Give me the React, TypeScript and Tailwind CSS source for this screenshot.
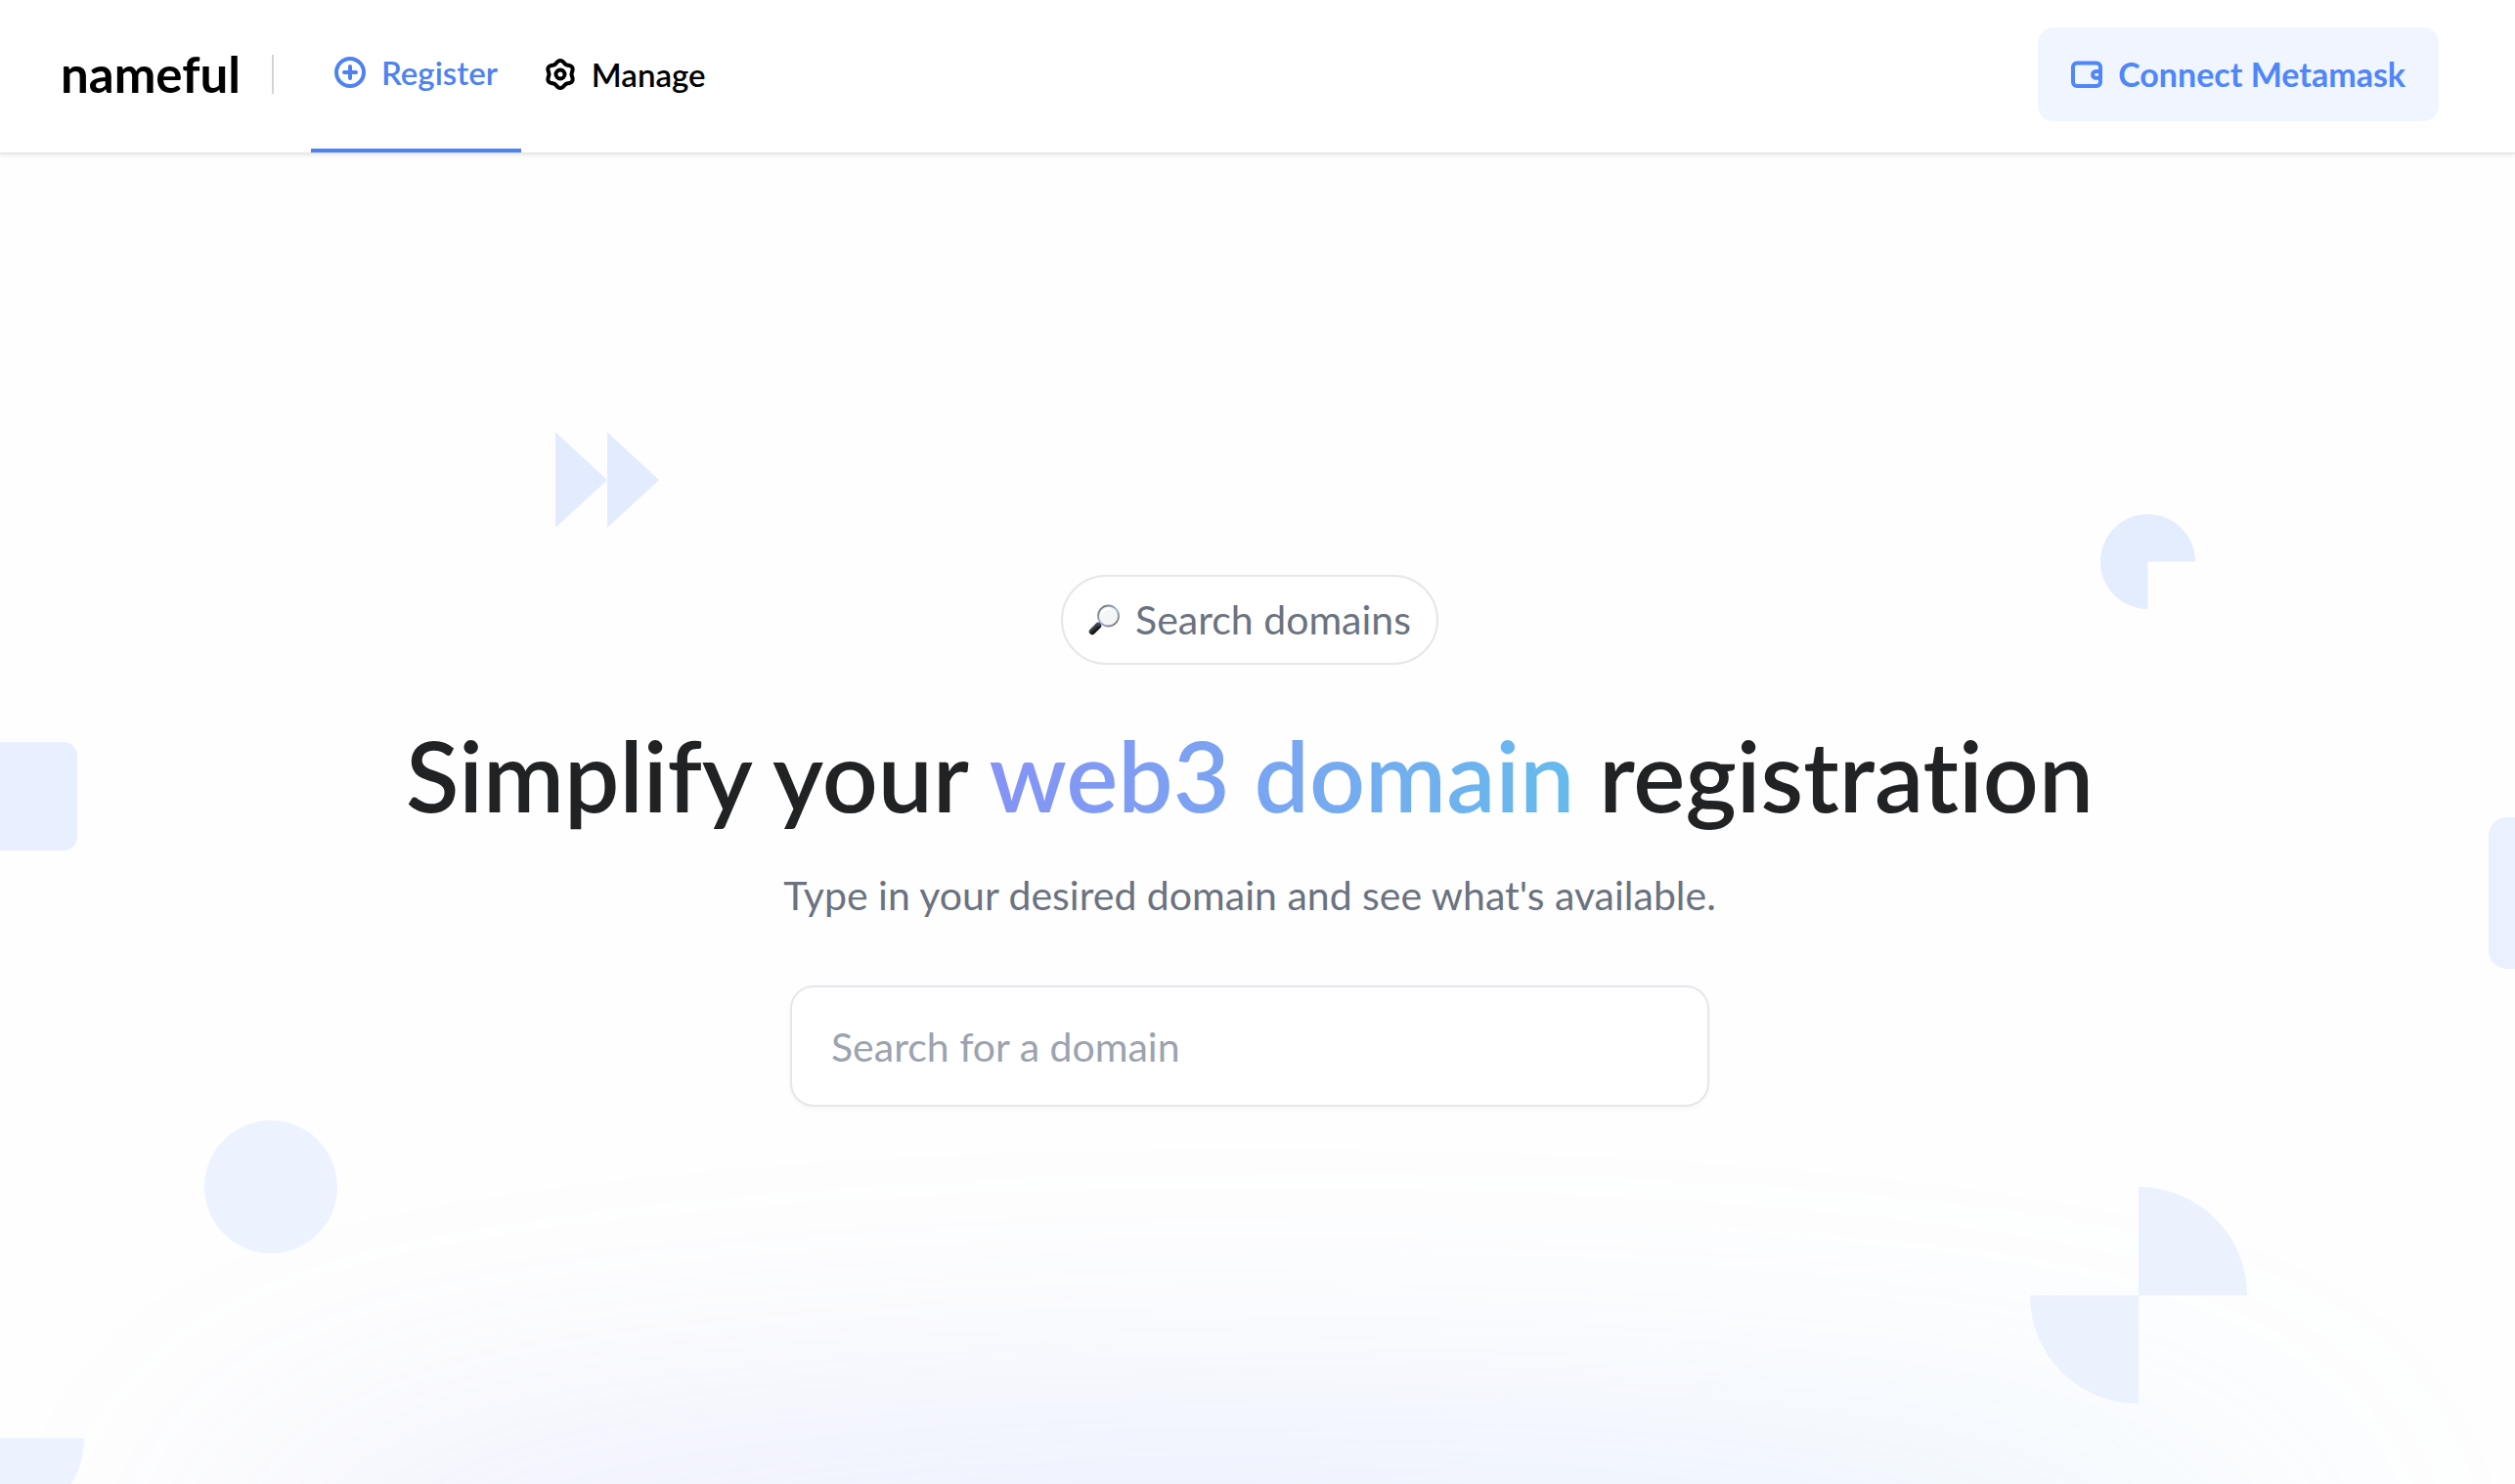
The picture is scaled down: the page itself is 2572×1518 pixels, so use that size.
const TEXT = "[font-variant-ligatures:none]";

const gearPath =
  Array.from({ length: 72 }, (_, i) => {
    const angle = (i / 72) * Math.PI * 2;
    const radius = 12.8 + 1.3 * Math.cos(angle * 6);
    const x = (16 + radius * Math.sin(angle)).toFixed(2);
    const y = (16 - radius * Math.cos(angle)).toFixed(2);
    return `${i === 0 ? "M" : "L"}${x} ${y}`;
  }).join("") + "Z";

function PlusCircleIcon() {
  return (
    <svg viewBox="0 0 32 32" className="size-8" fill="none" stroke="currentColor" strokeWidth="4" strokeLinecap="round" aria-hidden="true">
      <circle cx="16" cy="16" r="14" />
      <path d="M16 10v12M10 16h12" />
    </svg>
  );
}

function GearIcon() {
  return (
    <svg viewBox="0 0 32 32" className="size-8" fill="none" stroke="currentColor" strokeWidth="4" strokeLinejoin="round" aria-hidden="true">
      <path d={gearPath} />
      <circle cx="16" cy="16" r="4.5" />
    </svg>
  );
}

function WalletIcon() {
  return (
    <svg viewBox="0 0 32 32" className="size-8" fill="none" stroke="currentColor" strokeWidth="4" strokeLinejoin="round" aria-hidden="true">
      <rect x="2" y="4.5" width="28" height="23.5" rx="4" />
      <path d="M29 13h-3.5a3.4 3.4 0 0 0 0 6.800H29" />
    </svg>
  );
}

function MagnifierIcon() {
  return (
    <svg viewBox="0 0 32 32" className="size-8" fill="none" aria-hidden="true">
      <defs>
        <linearGradient id="handle" x1="5" y1="22" x2="11" y2="29" gradientUnits="userSpaceOnUse">
          <stop stopColor="#555a60" />
          <stop offset="0.5" stopColor="#1b1d20" />
          <stop offset="1" stopColor="#000000" />
        </linearGradient>
        <linearGradient id="rim" x1="12" y1="4" x2="28" y2="22" gradientUnits="userSpaceOnUse">
          <stop stopColor="#77797d" />
          <stop offset="0.5" stopColor="#9fb4d4" />
          <stop offset="1" stopColor="#7c726c" />
        </linearGradient>
      </defs>
      <path d="M10 22 4 28" stroke="url(#handle)" strokeWidth="6.5" strokeLinecap="round" />
      <path d="m10 22 4-4" stroke="#4a4d52" strokeWidth="2.5" />
      <circle cx="20.5" cy="12" r="10.5" fill="#f4f5f6" stroke="url(#rim)" strokeWidth="1.8" />
      <path d="M14.5 8.5a7 7 0 0 1 8-3" stroke="#ffffff" strokeWidth="2" strokeLinecap="round" />
    </svg>
  );
}

function Backdrop() {
  return (
    <div className="pointer-events-none absolute inset-0 -z-10 overflow-hidden" aria-hidden="true">
      <div className="absolute -bottom-64 left-[8%] right-[8%] h-80 rounded-[50%] bg-linear-to-r from-[#818cf8] via-[#7f9bfa] to-[#7dc8fa] opacity-[0.17] blur-[150px]" />
      <svg viewBox="0 0 106 96" className="absolute left-[22%] top-[286px] w-[108px] fill-[#e3ecfe]">
        <path d="M2 0 54 48 2 96ZM54 0l52 48-52 48Z" />
      </svg>
      <svg viewBox="0 0 98 98" className="absolute right-[327px] top-[370px] w-[97px] fill-[#e3edfd]">
        <path d="M49 49h49A49 49 0 1 0 49 98Z" />
      </svg>
      <div className="absolute left-0 top-[603px] h-[111px] w-[79px] rounded-r-[14px] bg-[#e8effe]" />
      <div className="absolute right-0 top-[680px] h-[155px] w-[27px] rounded-l-[19px] bg-[#e9f0fe]" />
      <div className="absolute left-[209px] top-[990px] size-[136px] rounded-full bg-[#edf3fe]" />
      <svg viewBox="0 0 222 222" className="absolute right-[274px] top-[1058px] w-[222px] fill-[#ebf2fd]">
        <path d="M111 0A111 111 0 0 1 222 111H111ZM0 111h111v111A111 111 0 0 1 0 111Z" />
      </svg>
      <div className="absolute -bottom-10 left-0 h-[87px] w-[86px] rounded-br-full bg-[#edf3fe]" />
    </div>
  );
}

export default function App() {
  return (
    <div className={`${TEXT} relative isolate flex min-h-screen flex-col bg-[#fefefe] font-['Lato',sans-serif] text-black`}>
      <header className="flex h-[156px] shrink-0 items-center bg-white pl-[62px] pr-[78px] shadow-[0_1px_0_#e2e2e2,0_2px_5px_rgba(0,0,0,0.12)]">
        <a href="#home" className="pb-1 text-[51px] leading-[60px] font-bold">nameful</a>
        <div className="ml-8 mr-[38px] mb-1 h-10 w-0.5 bg-[#d1d5db]" />
        <nav className="flex h-full items-stretch text-[33px] leading-10 font-semibold" aria-label="Main">
          <a href="#register" className="flex items-center gap-4 border-b-4 border-[#4d82f0] px-6 pb-1 text-[#4d82f0]">
            <PlusCircleIcon />
            Register
          </a>
          <a href="#manage" className="flex items-center gap-4 px-6 pb-1">
            <GearIcon />
            Manage
          </a>
        </nav>
        <button type="button" className="mb-1 ml-auto flex h-24 items-center gap-4 rounded-2xl bg-[#f0f5ff] px-[34px] text-[34px] leading-10 font-bold text-[#4f86f9]">
          <WalletIcon />
          Connect Metamask
        </button>
      </header>

      <main className="relative flex flex-1 flex-col items-center px-8 pt-[432px] pr-12 text-center">
        <Backdrop />
        <p className="flex h-[92px] items-center gap-4 rounded-full border-2 border-[#e5e7eb] bg-white px-[26px] text-[41px] leading-12 text-[#6b7280]">
          <MagnifierIcon />
          Search domains
        </p>
        <h1 className="mt-[52px] text-[100px] leading-[120px] font-semibold text-[#202224]">
          Simplify your{" "}
          <span className="bg-linear-to-r from-[#8593f5] to-[#66baed] bg-clip-text text-transparent">web3 domain</span>{" "}
          registration
        </h1>
        <p className="mt-10 text-[41px] leading-12 text-[#6b7280]">
          Type in your desired domain and see what's available.
        </p>
        <input
          type="text"
          aria-label="Search for a domain"
          placeholder="Search for a domain"
          className="mt-[68px] h-[124px] w-full max-w-[940px] rounded-3xl border-2 border-[#e5e7eb] bg-white px-10 text-[41px] text-[#202224] shadow-[0_2px_4px_rgba(0,0,0,0.04)] outline-none placeholder:text-[#9ca3af]"
        />
      </main>
    </div>
  );
}
